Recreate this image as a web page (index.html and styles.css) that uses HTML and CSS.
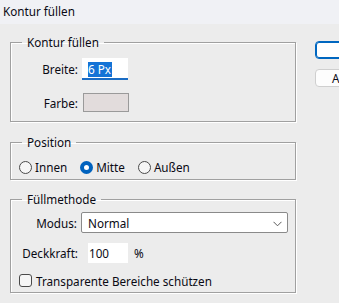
FILE: index.html
```html
<!DOCTYPE html>
<html lang="de">
<head>
<meta charset="utf-8">
<title>Kontur füllen</title>
<link rel="stylesheet" href="styles.css">
</head>
<body>
<div class="titlebar">Kontur füllen</div>
<div class="main">
  <div class="left">
    <fieldset class="group g1">
      <legend>Kontur füllen</legend>
      <div class="row r-breite">
        <span class="lbl">Breite:</span>
        <span class="textbox focused"><span class="sel">6 Px</span></span>
      </div>
      <div class="row r-farbe">
        <span class="lbl">Farbe:</span>
        <span class="swatch"></span>
      </div>
    </fieldset>
    <fieldset class="group g2">
      <legend>Position</legend>
      <div class="radios">
        <label class="radio"><span class="dot"></span>Innen</label>
        <label class="radio on"><span class="dot"></span>Mitte</label>
        <label class="radio"><span class="dot"></span>Außen</label>
      </div>
    </fieldset>
    <fieldset class="group g3">
      <legend>Füllmethode</legend>
      <div class="row r-modus">
        <span class="lbl">Modus:</span>
        <span class="select">Normal
          <svg class="chev" width="9" height="6" viewBox="0 0 9 6"><path d="M0.5 0.8 L4.5 4.8 L8.5 0.8" fill="none" stroke="#5a5a5a" stroke-width="1"/></svg>
        </span>
      </div>
      <div class="row r-deck">
        <span class="lbl">Deckkraft:</span>
        <span class="numbox">100</span>
        <span class="pct">%</span>
      </div>
      <label class="check"><span class="box"></span>Transparente Bereiche schützen</label>
    </fieldset>
  </div>
  <div class="right">
    <button class="btn primary">OK</button>
    <button class="btn">Abbrechen</button>
  </div>
</div>
</body>
</html>
```
FILE: styles.css
```css
html, body {
  margin: 0;
  padding: 0;
  overflow: hidden;
}
body {
  width: 339px;
  height: 303px;
  background: #ececec;
  font-family: "Noto Sans", "DejaVu Sans", sans-serif;
  font-size: 11.7px;
  line-height: 16px;
  color: #0a0a14;
}
.titlebar {
  height: 24px;
  line-height: 23px;
  padding-left: 3px;
  background: #f0f1f5;
}
.main {
  display: flex;
  padding: 10px 0 0 10px;
}
.left {
  width: 287px;
  flex: none;
}
.group {
  margin: 0;
  padding: 0;
  border: 1px solid #a0a0a0;
  box-shadow: 1px 1px 0 #fff, inset 1px 1px 0 #fff;
  width: 286px;
  box-sizing: border-box;
  min-width: 0;
}
.group legend {
  margin-left: 11px;
  padding: 0 5px 0 5px;
  line-height: 16px;
}
.g2 { margin-top: 12px; }
.g3 { margin-top: 11px; }

.row {
  display: flex;
  align-items: center;
}
.lbl {
  width: 67px;
  text-align: right;
  flex: none;
}
.r-breite { margin-top: 8px; height: 22px; }
.r-farbe { margin-top: 13px; height: 19px; margin-bottom: 9px; }

.textbox {
  margin-left: 4px;
  width: 46px;
  height: 22px;
  box-sizing: border-box;
  background: #fff;
  display: flex;
  align-items: center;
  padding-left: 6px;
}
.textbox.focused {
  border-bottom: 2px solid #1a6cc4;
  padding-top: 2px;
}
.sel {
  background: #1473d6;
  color: #fff;
  line-height: 15px;
  padding-right: 1px;
}
.swatch {
  margin-left: 5px;
  width: 46px;
  height: 19px;
  box-sizing: border-box;
  border: 1px solid #9a9a9a;
  background: #e2dcdc;
}

.radios {
  display: flex;
  align-items: center;
  height: 16px;
  margin: 9px 0 4px 8px;
}
.radio {
  display: flex;
  align-items: center;
  margin-right: 13px;
}
.radio .dot {
  width: 13px;
  height: 13px;
  box-sizing: border-box;
  border-radius: 50%;
  border: 1px solid #4a4a4a;
  background: #f6f6f6;
  margin-right: 3px;
}
.radio.on .dot {
  border: 4px solid #0062be;
  background: #fff;
}

.r-modus { margin-top: 5px; height: 21px; }
.r-modus .lbl { width: 66px; }
.select {
  margin-left: 4px;
  width: 207px;
  height: 21px;
  box-sizing: border-box;
  border: 1px solid #8a8a8a;
  border-radius: 2px;
  background: #fff;
  display: flex;
  align-items: center;
  padding-left: 6px;
  position: relative;
}
.chev {
  position: absolute;
  right: 5px;
  top: 8px;
}
.r-deck { margin-top: 10px; height: 20px; }
.numbox {
  margin-left: 10px;
  width: 40px;
  height: 20px;
  background: #fff;
  display: flex;
  align-items: center;
  padding-left: 1px;
  box-sizing: border-box;
}
.pct { margin-left: 6px; }

.check {
  display: flex;
  align-items: center;
  margin: 11px 0 5px 8px;
  height: 13px;
}
.check .box {
  width: 13px;
  height: 13px;
  box-sizing: border-box;
  border: 1px solid #4a4a4a;
  border-radius: 3px;
  background: #f6f6f6;
  margin-right: 4px;
}

.right {
  display: flex;
  flex-direction: column;
  margin-left: 18px;
  padding-top: 7px;
}
.btn {
  font: inherit;
  color: inherit;
  width: 89px;
  height: 18px;
  box-sizing: border-box;
  background: #fdfdfd;
  border: 1px solid #cfcfcf;
  border-radius: 4px;
  padding: 0 0 0 16px;
  text-align: left;
  line-height: 14px;
}
.btn.primary {
  border: 1px solid #0067c0;
  box-shadow: inset 0 0 0 1px #0067c0;
  background: #fff;
  margin-bottom: 10px;
  padding-left: 38px;
}
```
